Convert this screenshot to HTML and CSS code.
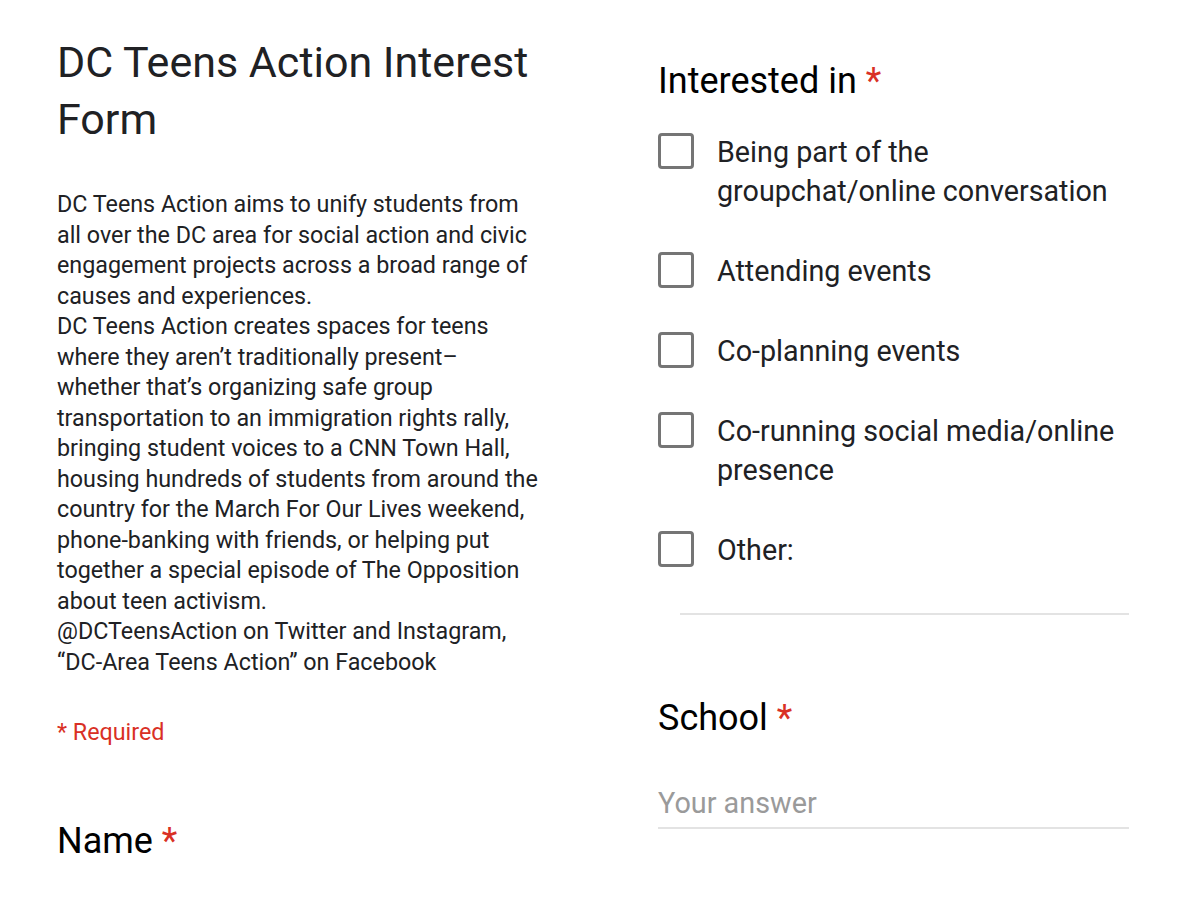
FILE: index.html
```html
<!DOCTYPE html>
<html lang="en">
<head>
<meta charset="utf-8">
<title>DC Teens Action Interest Form</title>
<link rel="stylesheet" href="styles.css">
</head>
<body>
<div class="page">
  <section class="col left">
    <h1 class="title">DC Teens Action Interest<br>Form</h1>
    <p class="desc">DC Teens Action aims to unify students from<br>all over the DC area for social action and civic<br>engagement projects across a broad range of<br>causes and experiences.<br>DC Teens Action creates spaces for teens<br>where they aren’t traditionally present–<br>whether that’s organizing safe group<br>transportation to an immigration rights rally,<br>bringing student voices to a CNN Town Hall,<br>housing hundreds of students from around the<br>country for the March For Our Lives weekend,<br>phone-banking with friends, or helping put<br>together a special episode of The Opposition<br>about teen activism.<br>@DCTeensAction on Twitter and Instagram,<br>“DC-Area Teens Action” on Facebook</p>
    <p class="required">* Required</p>
    <h2 class="question name-q">Name <span class="star">*</span></h2>
  </section>
  <section class="col right">
    <h2 class="question interest-q">Interested in <span class="star">*</span></h2>
    <ul class="options">
      <li class="option"><span class="box"></span><span class="label">Being part of the<br>groupchat/online conversation</span></li>
      <li class="option"><span class="box"></span><span class="label">Attending events</span></li>
      <li class="option"><span class="box"></span><span class="label">Co-planning events</span></li>
      <li class="option"><span class="box"></span><span class="label">Co-running social media/online<br>presence</span></li>
      <li class="option"><span class="box"></span><span class="label">Other:</span></li>
    </ul>
    <div class="other-line"></div>
    <h2 class="question school-q">School <span class="star">*</span></h2>
    <div class="answer">Your answer</div>
  </section>
</div>
</body>
</html>
```
FILE: styles.css
```css
html, body {
  margin: 0;
  padding: 0;
  background: #ffffff;
}
body {
  font-family: Roboto, "Liberation Sans", Arial, sans-serif;
  color: #202124;
}
.page {
  display: grid;
  grid-template-columns: 520px 471px;
  column-gap: 81px;
  padding-left: 57px;
  width: 1200px;
  box-sizing: border-box;
}
.col {
  display: flex;
  flex-direction: column;
}
.title {
  margin: 34px 0 0 0;
  font-size: 43px;
  line-height: 57px;
  font-weight: 400;
  color: #202124;
}
.desc {
  margin: 41px 0 0 0;
  font-size: 23.3px;
  line-height: 30.5px;
  white-space: nowrap;
}
.required {
  margin: 40px 0 0 0;
  font-size: 23.3px;
  line-height: 30.5px;
  color: #d93025;
}
.question {
  margin: 0;
  font-size: 36px;
  line-height: 44px;
  font-weight: 400;
  color: #000000;
}
.star {
  color: #d93025;
}
.name-q {
  margin-top: 71px;
}
.interest-q {
  margin-top: 59px;
}
.options {
  list-style: none;
  margin: 30px 0 0 0;
  padding: 0;
  display: flex;
  flex-direction: column;
  gap: 41px;
}
.option {
  display: flex;
  align-items: flex-start;
}
.box {
  flex: none;
  width: 36px;
  height: 36px;
  box-sizing: border-box;
  border: 3px solid #757575;
  border-radius: 4px;
}
.label {
  margin-left: 23px;
  font-size: 28.7px;
  line-height: 39px;
  color: #202124;
}
.other-line {
  margin: 43px 0 0 22px;
  height: 2px;
  background: #e3e3e3;
}
.school-q {
  margin-top: 81px;
}
.answer {
  margin-top: 44px;
  font-size: 28.8px;
  line-height: 38px;
  color: #9a9a9a;
  padding-bottom: 5px;
  border-bottom: 2px solid #e3e3e3;
}
```
